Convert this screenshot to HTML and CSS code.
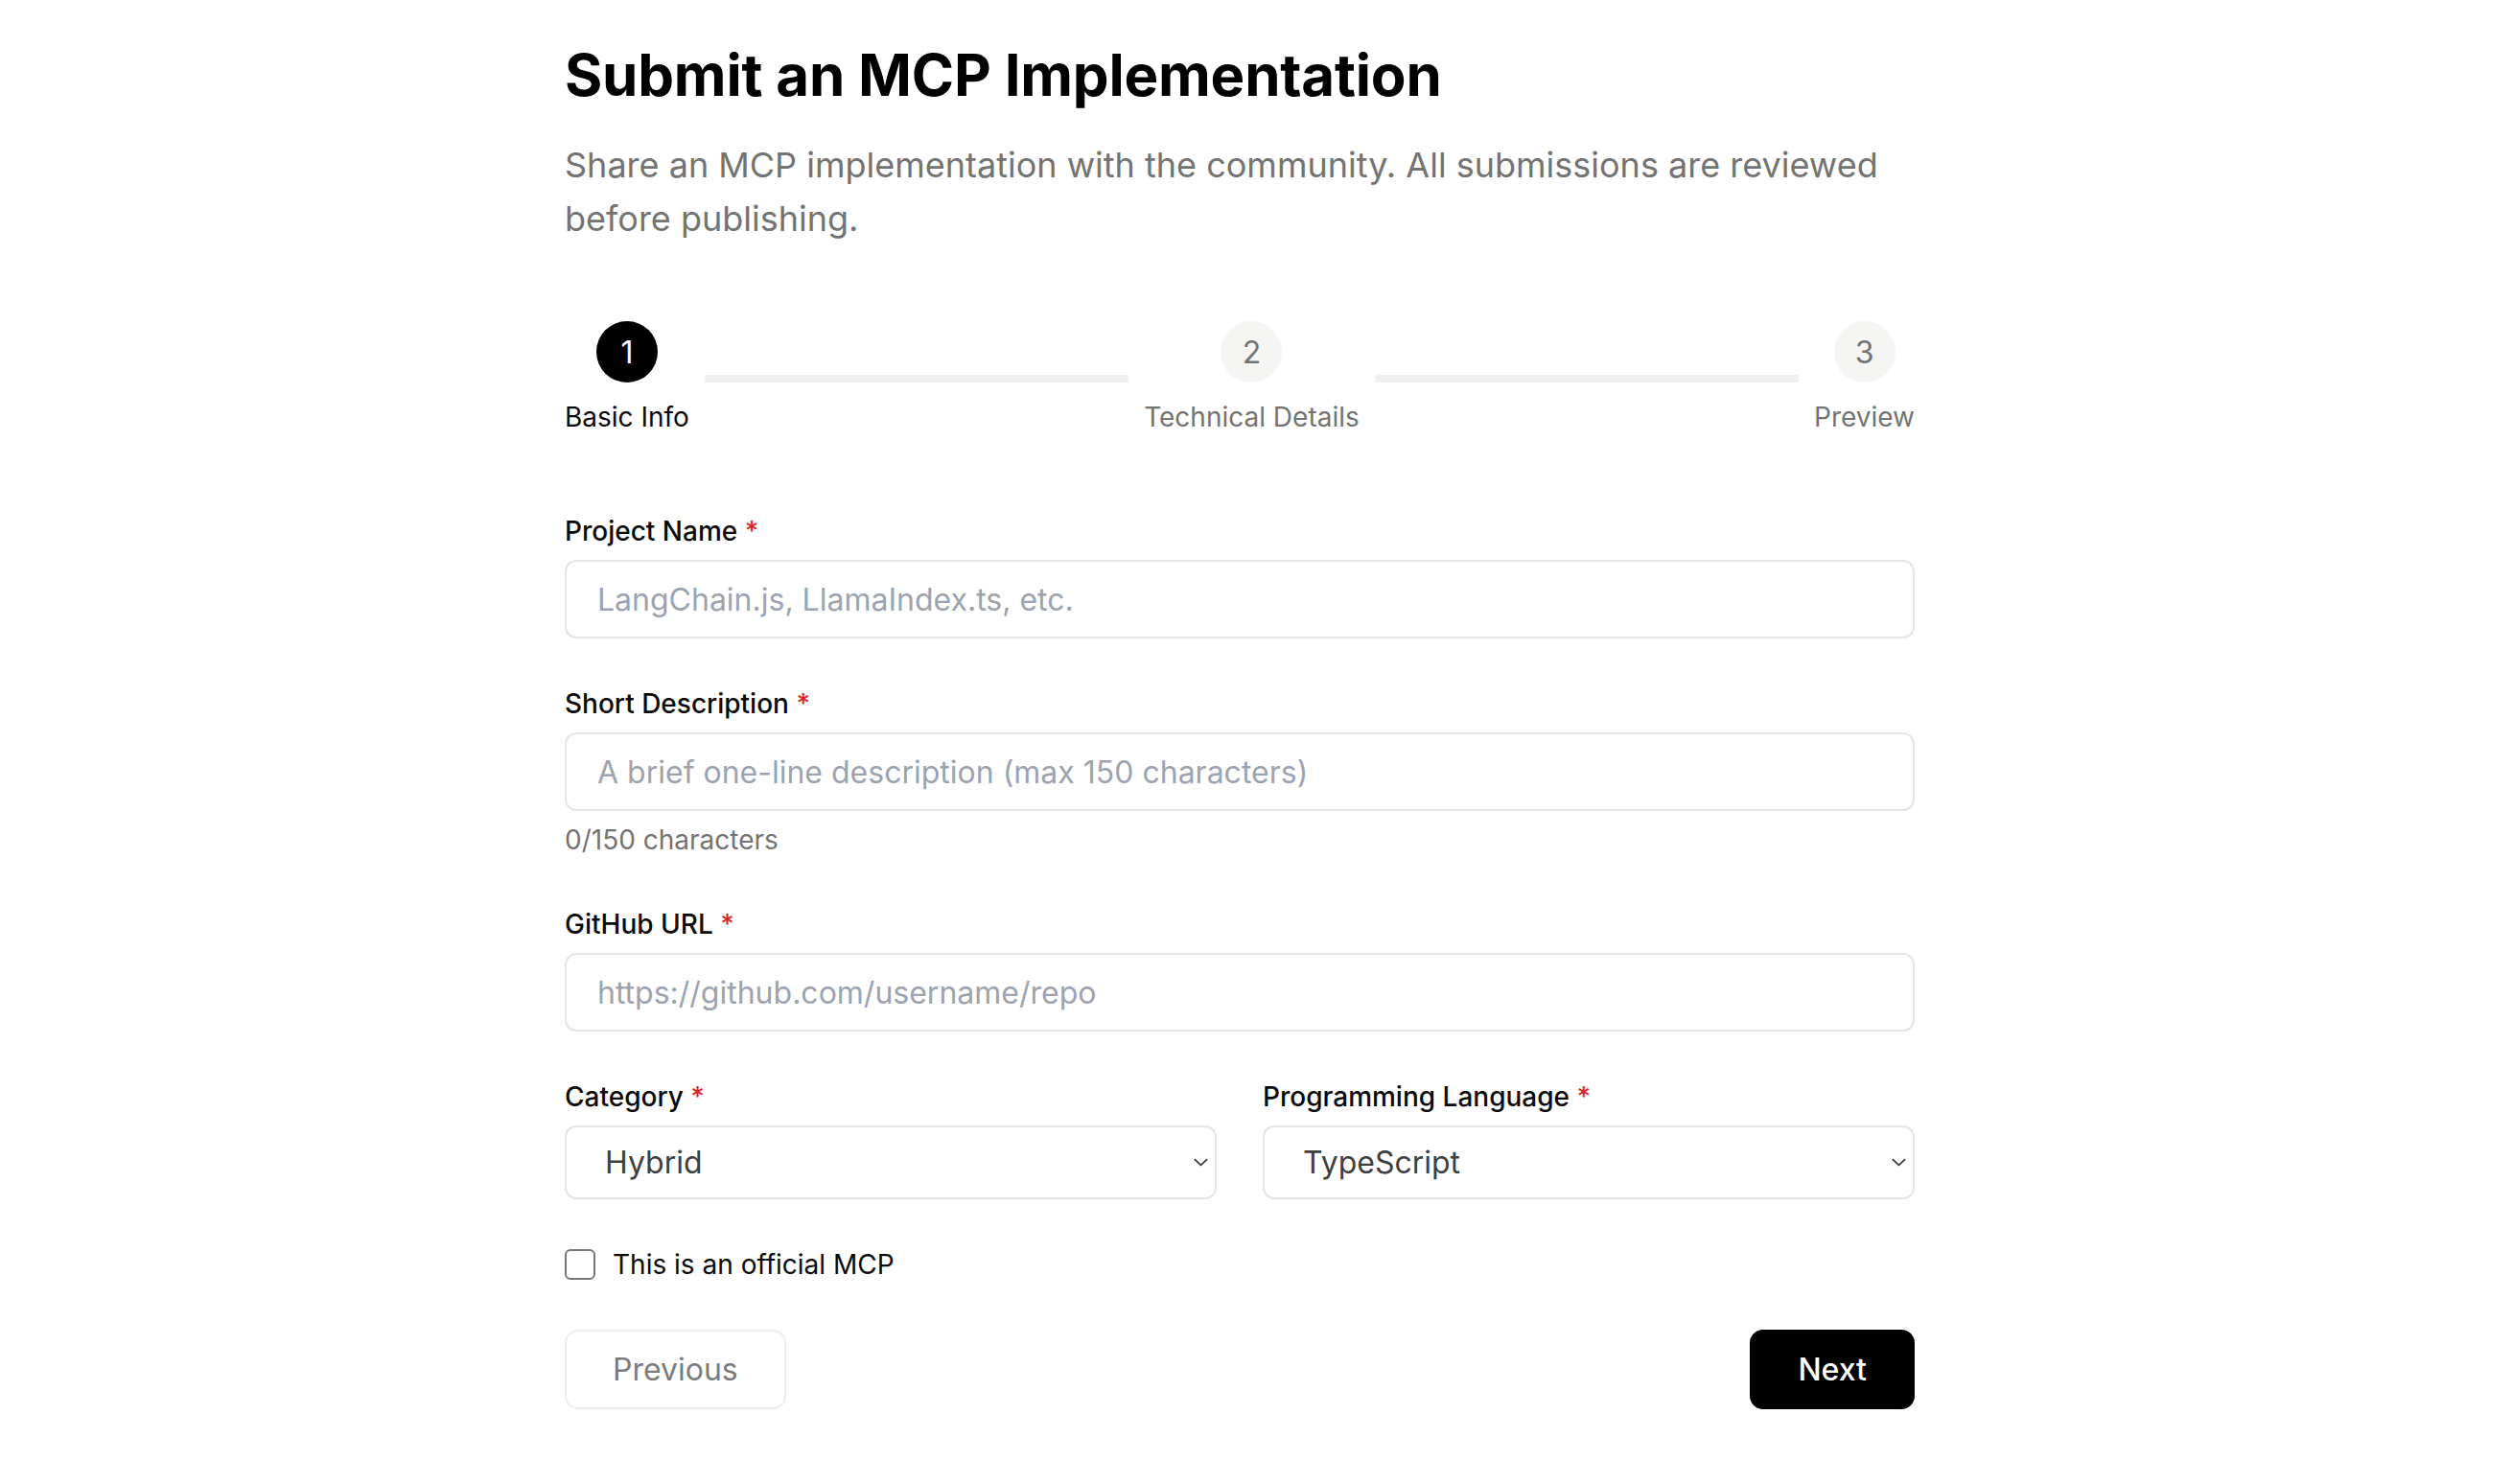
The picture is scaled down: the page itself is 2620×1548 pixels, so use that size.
FILE: index.html
```html
<!DOCTYPE html>
<html lang="en">
<head>
<meta charset="utf-8">
<title>Submit an MCP Implementation</title>
<link rel="stylesheet" href="styles.css">
</head>
<body>
<div class="page">
  <main class="container">
    <h1 class="title">Submit an MCP Implementation</h1>
    <p class="subtitle">Share an MCP implementation with the community. All submissions are reviewed before publishing.</p>

    <div class="steps">
      <div class="step active">
        <div class="step-circle">1</div>
        <div class="step-label">Basic Info</div>
      </div>
      <div class="step-line"></div>
      <div class="step">
        <div class="step-circle">2</div>
        <div class="step-label">Technical Details</div>
      </div>
      <div class="step-line"></div>
      <div class="step">
        <div class="step-circle">3</div>
        <div class="step-label">Preview</div>
      </div>
    </div>

    <form class="form">
      <div class="field">
        <label class="label">Project Name <span class="req">*</span></label>
        <input class="input" type="text" placeholder="LangChain.js, LlamaIndex.ts, etc.">
      </div>
      <div class="field">
        <label class="label">Short Description <span class="req">*</span></label>
        <input class="input" type="text" placeholder="A brief one-line description (max 150 characters)">
        <div class="hint">0/150 characters</div>
      </div>
      <div class="field">
        <label class="label">GitHub URL <span class="req">*</span></label>
        <input class="input" type="text" placeholder="https://github.com/username/repo">
      </div>
      <div class="row">
        <div class="field">
          <label class="label">Category <span class="req">*</span></label>
          <div class="select-wrap">
            <select class="select"><option>Hybrid</option></select>
            <svg class="chevron" viewBox="0 0 16 9" width="15" height="9"><path d="M1.5 1.5 L8 7.5 L14.5 1.5" fill="none" stroke="#333" stroke-width="1.8" stroke-linecap="round" stroke-linejoin="round"/></svg>
          </div>
        </div>
        <div class="field">
          <label class="label">Programming Language <span class="req">*</span></label>
          <div class="select-wrap">
            <select class="select"><option>TypeScript</option></select>
            <svg class="chevron" viewBox="0 0 16 9" width="15" height="9"><path d="M1.5 1.5 L8 7.5 L14.5 1.5" fill="none" stroke="#333" stroke-width="1.8" stroke-linecap="round" stroke-linejoin="round"/></svg>
          </div>
        </div>
      </div>
      <label class="check">
        <span class="box"></span>
        <span class="check-text">This is an official MCP</span>
      </label>
      <div class="actions">
        <button type="button" class="btn btn-prev">Previous</button>
        <button type="button" class="btn btn-next">Next</button>
      </div>
    </form>
  </main>
</div>
</body>
</html>
```
FILE: styles.css
```css
* { box-sizing: border-box; }
html, body { margin: 0; padding: 0; background: #ffffff; }
body {
  font-family: Inter, "Noto Sans", "Liberation Sans", sans-serif;
  color: #0a0a0a;
}
.page { padding: 38px 34px 60px 0; }
.container { width: 1408px; margin: 0 auto; }

.title {
  margin: 0 0 26px;
  font-size: 60px;
  line-height: 80px;
  font-weight: 700;
  color: #000;
  letter-spacing: -0.2px;
}
.subtitle {
  margin: 0;
  font-size: 36px;
  line-height: 56px;
  color: #737373;
}

.steps {
  display: flex;
  align-items: center;
  margin-top: 79px;
}
.step {
  display: flex;
  flex-direction: column;
  align-items: center;
}
.step-circle {
  width: 64px;
  height: 64px;
  border-radius: 50%;
  background: #f5f5f4;
  color: #737373;
  display: flex;
  align-items: center;
  justify-content: center;
  font-size: 32px;
  line-height: 1;
  padding-top: 1px;
}
.step.active .step-circle { background: #000; color: #fff; }
.step-label {
  margin-top: 16px;
  font-size: 28px;
  line-height: 40px;
  color: #737373;
  white-space: nowrap;
}
.step.active .step-label { color: #0a0a0a; }
.step-line {
  flex: 1;
  height: 8px;
  margin: 0 16px;
  background: #efefef;
}

.form { margin-top: 79px; display: flex; flex-direction: column; gap: 48px; }
.field { display: flex; flex-direction: column; }
.label {
  font-size: 28px;
  line-height: 40px;
  font-weight: 500;
  color: #0a0a0a;
  margin-bottom: 10px;
}
.req { color: #dc2626; }
.input {
  height: 82px;
  border: 2px solid #e5e5e5;
  border-radius: 12px;
  padding: 0 32px;
  font-family: inherit;
  font-size: 32px;
  color: #0a0a0a;
  outline: none;
  background: #fff;
}
.input::placeholder { color: #9ca3af; }
.hint {
  margin-top: 10px;
  font-size: 28px;
  line-height: 40px;
  color: #737373;
}

.row { display: grid; grid-template-columns: 1fr 1fr; gap: 48px; }
.select-wrap { position: relative; }
.select {
  width: 100%;
  height: 77px;
  appearance: none;
  -webkit-appearance: none;
  border: 2px solid #e5e5e5;
  border-radius: 12px;
  padding: 0 40px;
  font-family: inherit;
  font-size: 32px;
  color: #3f3f3f;
  background: #fff;
  outline: none;
}
.chevron {
  position: absolute;
  right: 9px;
  top: 34px;
}

.check { display: flex; align-items: center; gap: 18px; }
.box {
  width: 32px;
  height: 32px;
  border: 2px solid #767676;
  border-radius: 6px;
  background: #fff;
  flex: none;
}
.check-text { font-size: 28px; line-height: 40px; color: #0a0a0a; }

.actions { display: flex; justify-content: space-between; }
.btn {
  height: 83px;
  padding: 0 48px;
  border-radius: 14px;
  font-family: inherit;
  font-size: 32px;
  cursor: pointer;
}
.btn-prev { background: #fff; border: 2px solid #eeeeee; color: #7b7b7b; }
.btn-next { background: #000; border: 2px solid #000; color: #fff; font-weight: 500; }
```
